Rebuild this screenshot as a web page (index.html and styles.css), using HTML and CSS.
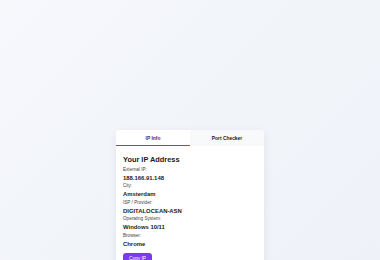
FILE: index.html
```html
<!DOCTYPE html>
<html>
<head>
<meta charset="utf-8">
<link rel="stylesheet" href="styles.css">
</head>
<body>
<div class="page">
  <div class="card">
    <div class="tabs">
      <div class="tab active">IP Info</div>
      <div class="tab">Port Checker</div>
    </div>
    <div class="content">
      <h2 class="title">Your IP Address</h2>
      <div class="label">External IP:</div>
      <div class="value">188.166.91.148</div>
      <div class="label">City:</div>
      <div class="value">Amsterdam</div>
      <div class="label">ISP / Provider:</div>
      <div class="value">DIGITALOCEAN-ASN</div>
      <div class="label">Operating System:</div>
      <div class="value">Windows 10/11</div>
      <div class="label">Browser:</div>
      <div class="value">Chrome</div>
      <button class="copy">Copy IP</button>
    </div>
  </div>
</div>
</body>
</html>
```
FILE: styles.css
```css
html, body {
  margin: 0;
  padding: 0;
  height: 100%;
  overflow: hidden;
}
body {
  background: linear-gradient(135deg, #f6f8fc 0%, #eef1f7 100%);
  font-family: "Liberation Sans", Arial, sans-serif;
}
.page {
  display: flex;
  justify-content: center;
  padding-top: 130px;
}
.card {
  width: 148px;
  background: #ffffff;
  border-radius: 4px;
  box-shadow: 0 2px 8px rgba(30, 40, 80, 0.08);
  overflow: hidden;
}
.tabs {
  display: flex;
  background: #f8f9fb;
}
.tab {
  flex: 1;
  height: 14px;
  display: flex;
  align-items: center;
  justify-content: center;
  font-size: 4.9px;
  font-weight: bold;
  color: #1a1a1a;
  border-bottom: 1.5px solid transparent;
  padding-top: 1px;
}
.tab.active {
  background: #ffffff;
  color: #4c1d95;
  border-bottom-color: #7c3aed;
}
.content {
  padding: 8.5px 7px 10px;
}
.title {
  margin: 0 0 2px;
  font-size: 7.4px;
  line-height: 9px;
  font-weight: bold;
  color: #1a1a1a;
}
.label {
  font-size: 4.6px;
  line-height: 7px;
  color: #444;
  margin-bottom: 1px;
}
.value {
  font-size: 5.9px;
  line-height: 8.5px;
  font-weight: bold;
  color: #1a1a1a;
}
.copy {
  display: block;
  margin-top: 5px;
  background: #7c3aed;
  color: #fff;
  border: none;
  border-radius: 3px;
  font-family: inherit;
  font-size: 4.8px;
  padding: 3px 6px;
}
```
